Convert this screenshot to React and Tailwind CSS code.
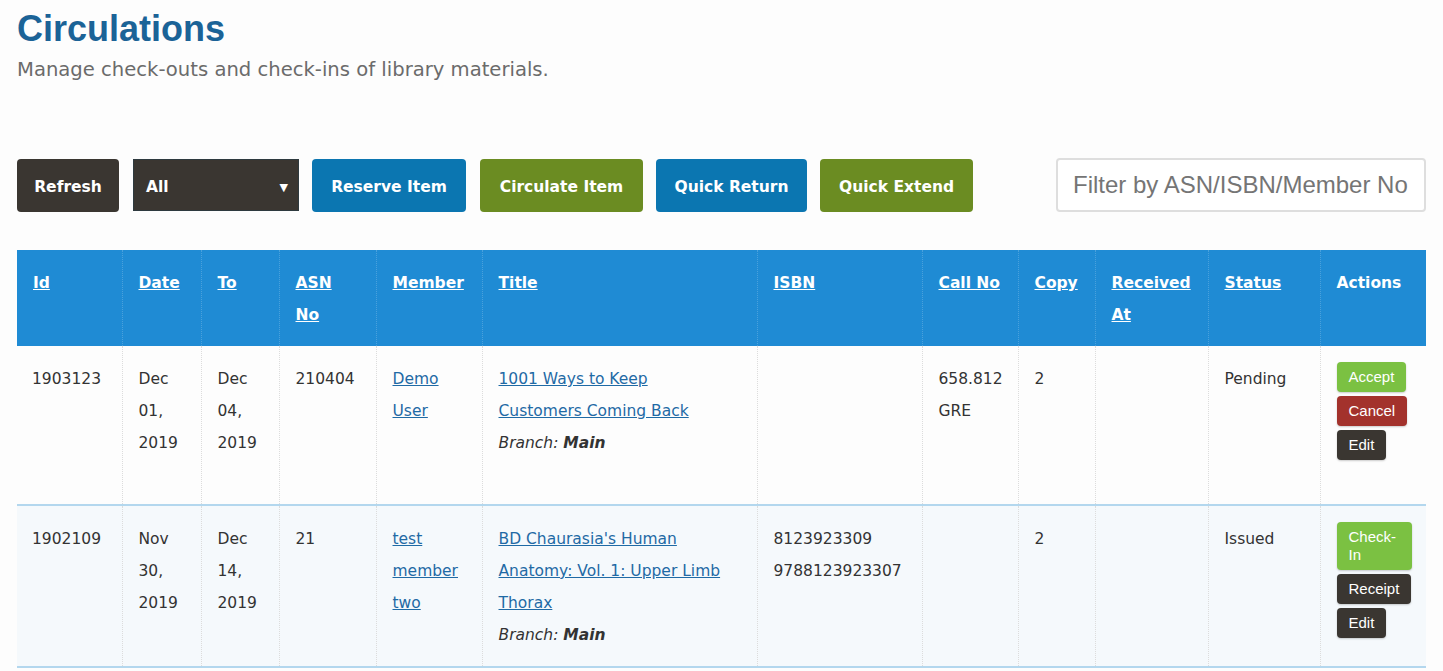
import { useState } from 'react'

const body = { fontFamily: '"DejaVu Sans", Verdana, sans-serif' }
const arial = { fontFamily: '"Liberation Sans", Arial, sans-serif' }

const COLS = [
  { key: 'id', label: ['Id'], w: 105 },
  { key: 'date', label: ['Date'], w: 79 },
  { key: 'to', label: ['To'], w: 78 },
  { key: 'asn', label: ['ASN', 'No'], w: 97 },
  { key: 'member', label: ['Member'], w: 106 },
  { key: 'title', label: ['Title'], w: 275 },
  { key: 'isbn', label: ['ISBN'], w: 165 },
  { key: 'call', label: ['Call No'], w: 96 },
  { key: 'copy', label: ['Copy'], w: 77 },
  { key: 'received', label: ['Received', 'At'], w: 113 },
  { key: 'status', label: ['Status'], w: 112 },
  { key: 'actions', label: ['Actions'], w: 106, plain: true },
]

const ROWS = [
  {
    id: '1903123',
    date: ['Dec', '01,', '2019'],
    to: ['Dec', '04,', '2019'],
    asn: '210404',
    member: ['Demo', 'User'],
    title: ['1001 Ways to Keep', 'Customers Coming Back'],
    isbn: [],
    call: ['658.812', 'GRE'],
    copy: '2',
    status: 'Pending',
    actions: [
      { label: 'Accept', cls: 'bg-[#7bc142]' },
      { label: 'Cancel', cls: 'bg-[#a3322c]' },
      { label: 'Edit', cls: 'bg-[#3a3631]' },
    ],
    tall: true,
  },
  {
    id: '1902109',
    date: ['Nov', '30,', '2019'],
    to: ['Dec', '14,', '2019'],
    asn: '21',
    member: ['test', 'member', 'two'],
    title: ["BD Chaurasia's Human", 'Anatomy: Vol. 1: Upper Limb', 'Thorax'],
    isbn: ['8123923309', '9788123923307'],
    call: [],
    copy: '2',
    status: 'Issued',
    actions: [
      { label: 'Check-In', cls: 'bg-[#7bc142]' },
      { label: 'Receipt', cls: 'bg-[#3a3631]' },
      { label: 'Edit', cls: 'bg-[#3a3631]' },
    ],
  },
]

function Lines({ items }) {
  return items.map((t, i) => <div key={i}>{t}</div>)
}

function ActionButton({ label, cls }) {
  return (
    <button
      style={arial}
      className={`${cls} text-white text-[15px] leading-[18px] px-3 py-[6px] rounded text-left shadow-[0_1px_2px_rgba(0,0,0,0.2)]`}
    >
      {label}
    </button>
  )
}

export default function App() {
  const [filter, setFilter] = useState('')
  const [scope] = useState('All')

  return (
    <div style={body} className="min-h-screen bg-[#fdfdfd] px-[17px] pt-[9px] text-[#333]">
      <h1 style={arial} className="text-[36px] leading-[40px] font-bold text-[#1b6397]">Circulations</h1>
      <p className="text-[19.6px] leading-[26px] mt-[8px] text-[#6b6b6b]">
        Manage check-outs and check-ins of library materials.
      </p>

      {/* toolbar */}
      <div className="flex items-center mt-[75px] h-[54px]">
        <div className="flex items-center text-white font-bold text-[15.5px]">
          <button className="h-[53px] w-[102px] pt-[5px] rounded bg-[#3a3631]">Refresh</button>
          <div className="relative ml-[14px] w-[166px] h-[52px] pt-[5px] bg-[#3a3631] border border-[#2e3a3f] flex items-center pl-3">
            <span>{scope}</span>
            <span className="absolute right-[10px] text-[11px] leading-none">▼</span>
          </div>
          <button className="ml-[13px] h-[53px] w-[154px] pt-[5px] rounded bg-[#0b76b1]">Reserve Item</button>
          <button className="ml-[14px] h-[53px] w-[163px] pt-[5px] rounded bg-[#6b8c22]">Circulate Item</button>
          <button className="ml-[13px] h-[53px] w-[151px] pt-[5px] rounded bg-[#0b76b1]">Quick Return</button>
          <button className="ml-[13px] h-[53px] w-[153px] pt-[5px] rounded bg-[#6b8c22]">Quick Extend</button>
        </div>
        <input
          value={filter}
          onChange={e => setFilter(e.target.value)}
          placeholder="Filter by ASN/ISBN/Member No"
          style={arial}
          className="ml-auto w-[370px] h-[54px] border-2 border-[#dedede] rounded bg-white px-[15px] text-[24px] placeholder:text-[#757575] outline-none"
        />
      </div>

      {/* table */}
      <table className="mt-[38px] w-[1409px] table-fixed border-collapse text-[15.5px] leading-[32px]">
        <colgroup>
          {COLS.map(c => (
            <col key={c.key} style={{ width: c.w }} />
          ))}
        </colgroup>
        <thead>
          <tr className="bg-[#1f8bd4] text-white font-bold align-top">
            {COLS.map((c, i) => (
              <th
                key={c.key}
                className={`text-left font-bold pl-4 pr-[14px] pt-[17px] pb-[15px] h-[96px] ${i < COLS.length - 1 ? 'border-r border-dotted border-[#4aa1dc]' : ''}`}
              >
                {c.plain ? (
                  c.label[0]
                ) : (
                  <a href="#" className="underline">
                    {c.label.map((l, j) => (
                      <span key={j}>
                        {j > 0 && <br />}
                        {l}
                      </span>
                    ))}
                  </a>
                )}
              </th>
            ))}
          </tr>
        </thead>
        <tbody>
          {ROWS.map((r, ri) => (
            <tr
              key={r.id}
              className={`align-top border-b-2 border-[#b3d7ee] ${ri % 2 ? 'bg-[#f5f9fc]' : 'bg-[#fdfdfd]'} ${r.tall ? 'h-[159px]' : ''}`}
            >
              <td className="pl-[15px] pt-[17px] pb-[15px] border-r border-dotted border-[#dcdcdc]">{r.id}</td>
              <td className="pl-4 pt-[17px] pb-[15px] border-r border-dotted border-[#dcdcdc]"><Lines items={r.date} /></td>
              <td className="pl-4 pt-[17px] pb-[15px] border-r border-dotted border-[#dcdcdc]"><Lines items={r.to} /></td>
              <td className="pl-4 pt-[17px] pb-[15px] border-r border-dotted border-[#dcdcdc]">{r.asn}</td>
              <td className="pl-4 pt-[17px] pb-[15px] border-r border-dotted border-[#dcdcdc]">
                <a href="#" className="underline text-[#1f6aa5]"><Lines items={r.member} /></a>
              </td>
              <td className="pl-4 pt-[17px] pb-[15px] border-r border-dotted border-[#dcdcdc]">
                <a href="#" className="underline text-[#1f6aa5]"><Lines items={r.title} /></a>
                <div className="italic">
                  Branch: <b>Main</b>
                </div>
              </td>
              <td className="pl-4 pt-[17px] pb-[15px] border-r border-dotted border-[#dcdcdc]"><Lines items={r.isbn} /></td>
              <td className="pl-4 pt-[17px] pb-[15px] border-r border-dotted border-[#dcdcdc]"><Lines items={r.call} /></td>
              <td className="pl-4 pt-[17px] pb-[15px] border-r border-dotted border-[#dcdcdc]">{r.copy}</td>
              <td className="pl-4 pt-[17px] pb-[15px] border-r border-dotted border-[#dcdcdc]"></td>
              <td className="pl-4 pt-[17px] pb-[15px] border-r border-dotted border-[#dcdcdc]">{r.status}</td>
              <td className="pl-4 pr-[14px] pt-4 pb-4">
                <div className="flex flex-col items-start gap-[4px]">
                  {r.actions.map(a => (
                    <ActionButton key={a.label} {...a} />
                  ))}
                </div>
              </td>
            </tr>
          ))}
        </tbody>
      </table>
    </div>
  )
}
